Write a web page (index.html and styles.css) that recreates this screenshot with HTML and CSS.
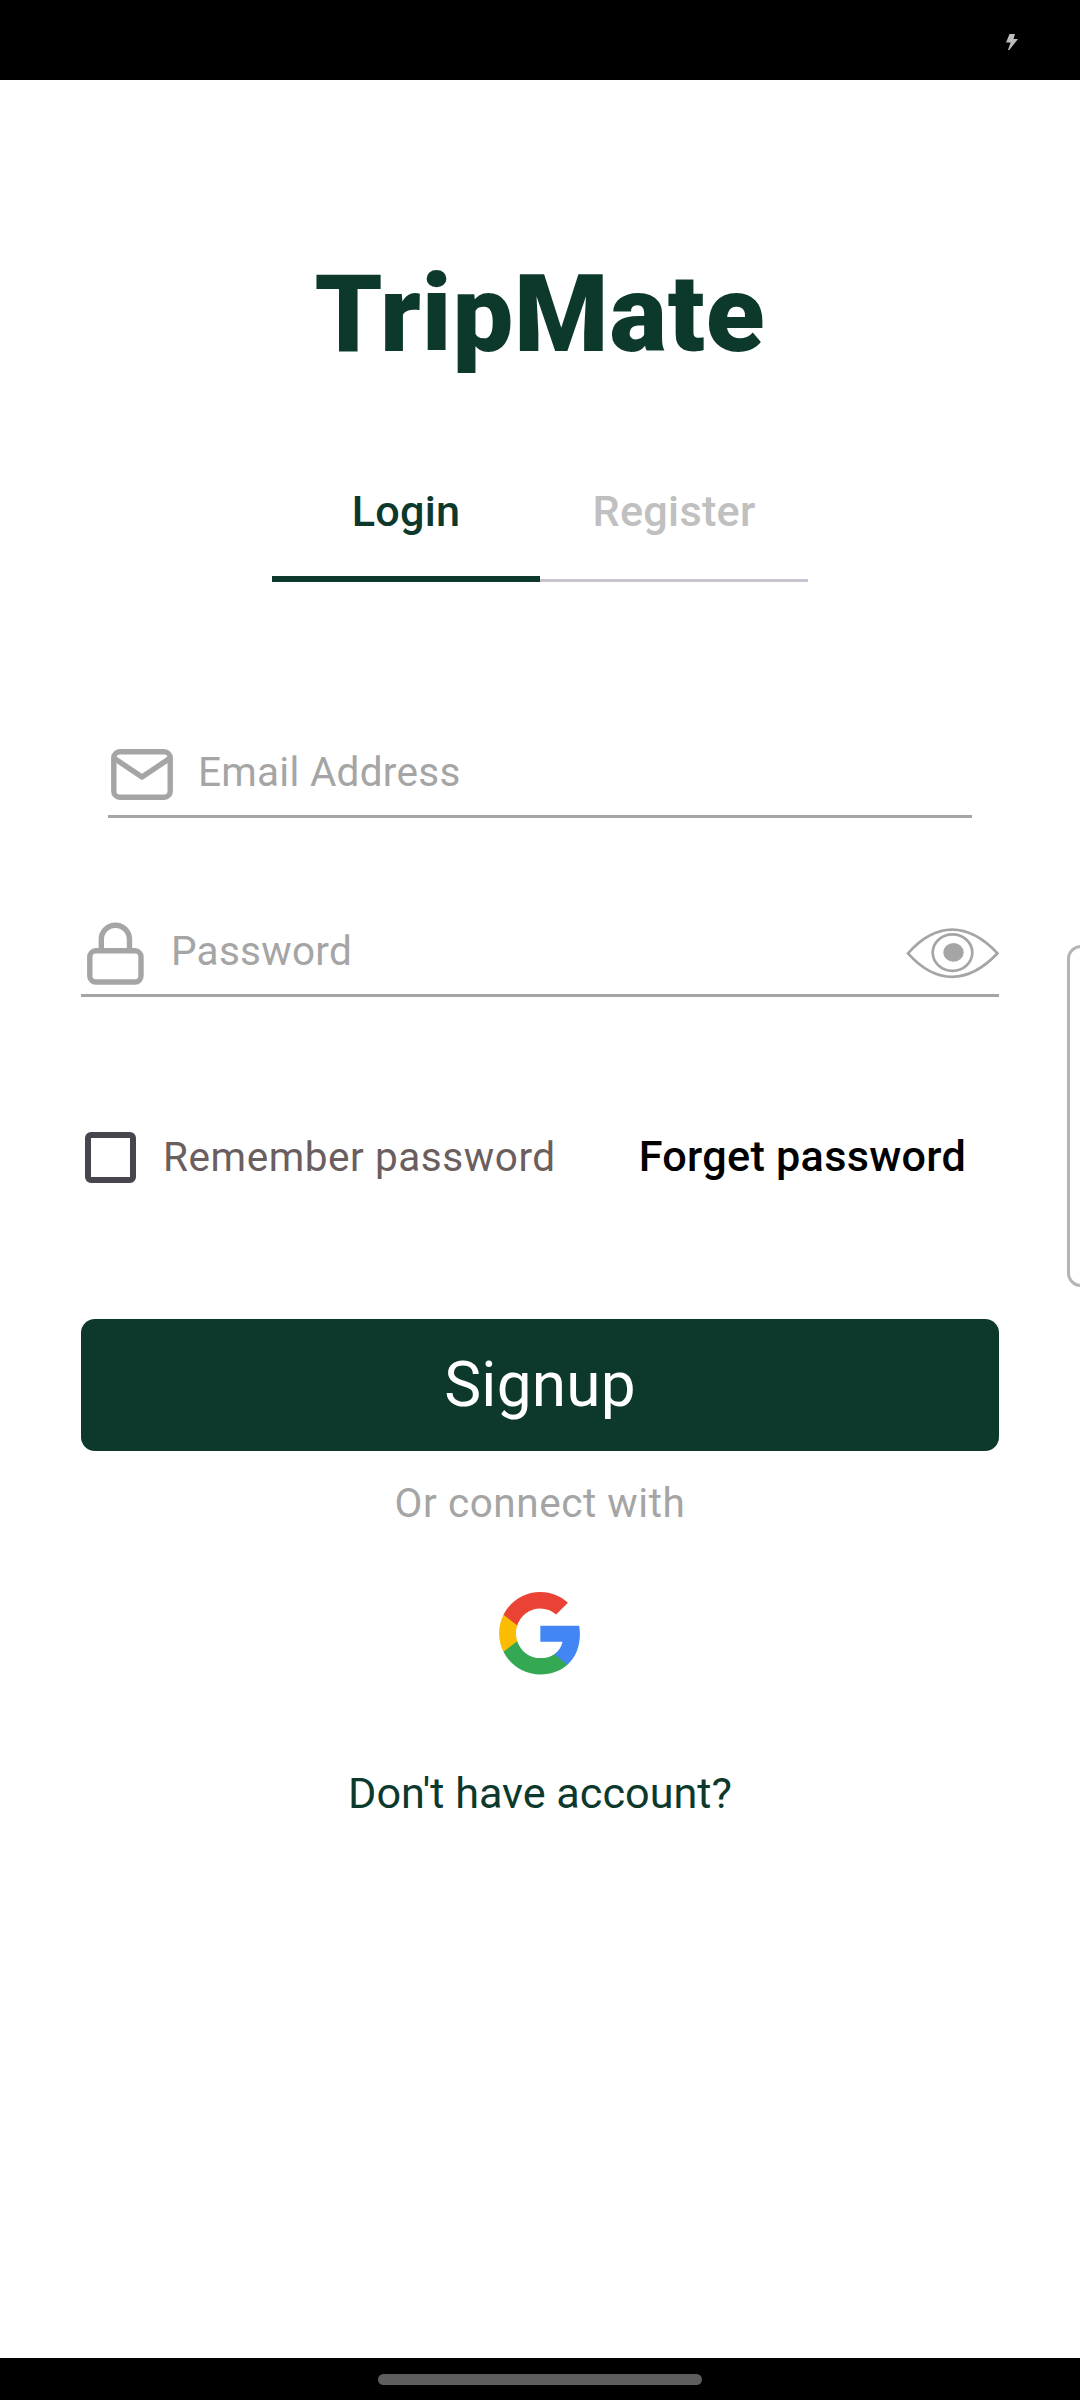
FILE: index.html
```html
<!DOCTYPE html>
<html lang="en">
<head>
<meta charset="utf-8">
<title>TripMate</title>
<link rel="stylesheet" href="styles.css">
</head>
<body>
<div class="screen">
  <header class="status-bar">
    <svg class="bolt" viewBox="0 0 12 16"><path d="M3.5 0H9L7.5 5H12L3.3 16H2L4.6 8.6H0Z"/></svg>
  </header>
  <main class="content">
    <h1 class="brand">TripMate</h1>
    <nav class="tabs">
      <div class="tab tab-active">Login</div>
      <div class="tab">Register</div>
    </nav>
    <form class="form">
      <div class="field field-email">
        <svg class="mail-icon" viewBox="0 0 62 51" fill="none">
          <rect x="2.8" y="2.8" width="56.4" height="45.4" rx="6"/>
          <path d="M3.5 9.5L31 28L58.5 9.5" stroke-linejoin="round"/>
        </svg>
        <span class="placeholder">Email Address</span>
      </div>
      <div class="field field-password">
        <svg class="lock-icon" viewBox="0 0 57 63" fill="none">
          <rect x="2.8" y="28.8" width="51.2" height="31.2" rx="6"/>
          <path d="M14.3 28V17.4a14.1 14.1 0 0 1 28.2 0V28"/>
        </svg>
        <span class="placeholder">Password</span>
        <svg class="eye-icon" viewBox="0 0 93 51" fill="none">
          <path d="M2 25.3C30 -6.3 62 -6.3 91.5 25.3C62 56.6 30 56.6 2 25.3Z"/>
          <ellipse cx="46.5" cy="24.6" rx="19.8" ry="18.2"/>
          <ellipse class="pupil" cx="47.5" cy="24.4" rx="10.2" ry="9.4"/>
        </svg>
      </div>
      <div class="options">
        <span class="checkbox"></span>
        <span class="remember">Remember password</span>
        <span class="forget">Forget password</span>
      </div>
      <div class="button">Signup</div>
    </form>
    <p class="connect">Or connect with</p>
    <svg class="google" viewBox="1 1 21.56 22">
      <path fill="#4285F4" d="M22.56 12.25c0-.78-.07-1.53-.2-2.25H12v4.26h5.92c-.26 1.37-1.04 2.53-2.21 3.31v2.77h3.57c2.08-1.92 3.28-4.74 3.28-8.09z"/>
      <path fill="#34A853" d="M12 23c2.97 0 5.46-.98 7.28-2.66l-3.57-2.77c-.98.66-2.23 1.06-3.71 1.06-2.86 0-5.29-1.93-6.16-4.53H2.18v2.84C3.99 20.53 7.7 23 12 23z"/>
      <path fill="#FBBC05" d="M5.84 14.09c-.22-.66-.35-1.36-.35-2.09s.13-1.43.35-2.09V7.07H2.18C1.43 8.55 1 10.22 1 12s.43 3.45 1.18 4.93l2.85-2.22.81-.62z"/>
      <path fill="#EA4335" d="M12 5.38c1.62 0 3.06.56 4.21 1.64l3.15-3.15C17.45 2.09 14.97 1 12 1 7.7 1 3.99 3.47 2.18 7.07l3.66 2.84c.87-2.6 3.3-4.53 6.16-4.53z"/>
    </svg>
    <p class="account">Don't have account?</p>
  </main>
  <footer class="nav-bar"><span class="handle"></span></footer>
  <div class="edge-panel"></div>
</div>
</body>
</html>
```
FILE: styles.css
```css
* { box-sizing: border-box; }
body { margin: 0; background: #fff; font-family: Roboto, sans-serif; }
.screen {
  position: relative;
  display: flex;
  flex-direction: column;
  width: 1080px;
  height: 2400px;
  overflow: hidden;
}
.status-bar {
  display: flex;
  justify-content: flex-end;
  height: 80px;
  padding: 34px 62px 0 0;
  background: #000;
}
.bolt { width: 12px; height: 16px; fill: #bdbdbd; }
.content {
  flex: 1;
  display: flex;
  flex-direction: column;
  align-items: center;
  padding-top: 171px;
}
.brand {
  margin: 0;
  font-size: 108px;
  line-height: 126px;
  font-weight: 900;
  letter-spacing: 0.85px;
  color: #0d392d;
}
.tabs { display: flex; width: 536px; margin-top: 75px; }
.tab {
  flex: 1;
  height: 130px;
  border-bottom: 3px solid #cac4d0;
  font-size: 43.2px;
  line-height: 120px;
  font-weight: 500;
  letter-spacing: 0.27px;
  text-align: center;
  color: #c0c0c0;
}
.tab-active { border-bottom: 6px solid #0d392d; color: #0d392d; }
.form { width: 918px; }
.field {
  display: flex;
  align-items: flex-start;
  border-bottom: 3px solid #a5a5a5;
}
.field svg { stroke: #a5a5a5; flex: none; }
.field-email { height: 87px; margin: 149px 27px 0; padding-left: 3px; }
.placeholder { font-size: 40.5px; line-height: 48px; letter-spacing: 0.27px; color: #a5a5a5; }
.mail-icon { width: 62px; height: 51px; margin-top: 18px; stroke-width: 5.4; }
.field-email .placeholder { margin: 17px 0 0 25px; }
.field-password { height: 87px; margin-top: 92px; padding-left: 5.5px; }
.lock-icon { width: 57px; height: 63px; margin-top: 12px; stroke-width: 5.4; }
.field-password .placeholder { margin: 17px 0 0 27.5px; }
.eye-icon { width: 93px; height: 51px; margin: 18px 0 0 auto; stroke-width: 2.7; }
.eye-icon .pupil { fill: #a5a5a5; stroke: none; }
.options { display: flex; align-items: center; margin-top: 135px; height: 51px; padding-left: 4px; }
.checkbox { width: 51px; height: 51px; border: 6px solid #49454f; border-radius: 6px; }
.remember {
  margin-left: 27px;
  font-size: 40.5px;
  line-height: 51px;
  letter-spacing: 0.56px;
  color: #6b5e5e;
}
.forget {
  margin: 0 33px 2px auto;
  font-size: 43.2px;
  line-height: 49px;
  font-weight: 500;
  letter-spacing: 0.27px;
  color: #000;
}
.button {
  height: 132px;
  margin-top: 136px;
  border-radius: 14px;
  background: #0d392d;
  color: #fff;
  font-size: 62.1px;
  line-height: 132px;
  letter-spacing: 0.2px;
  text-align: center;
}
.connect {
  margin: 28px 0 0;
  font-size: 40.5px;
  line-height: 48px;
  letter-spacing: 0.56px;
  color: #a5a5a5;
}
.google { width: 81px; height: 82.5px; margin: 65px 2px 0 0; }
.account { margin: 93px 0 0; font-size: 43.2px; line-height: 52px; color: #0d392d; }
.nav-bar { display: flex; justify-content: center; height: 42px; padding-top: 16px; background: #000; }
.handle { width: 324px; height: 11px; border-radius: 6px; background: #5e5e5e; }
.edge-panel {
  position: absolute;
  top: 945px;
  right: -20px;
  width: 33px;
  height: 342px;
  border: 3px solid #b5b5b5;
  border-radius: 14px;
}
```
